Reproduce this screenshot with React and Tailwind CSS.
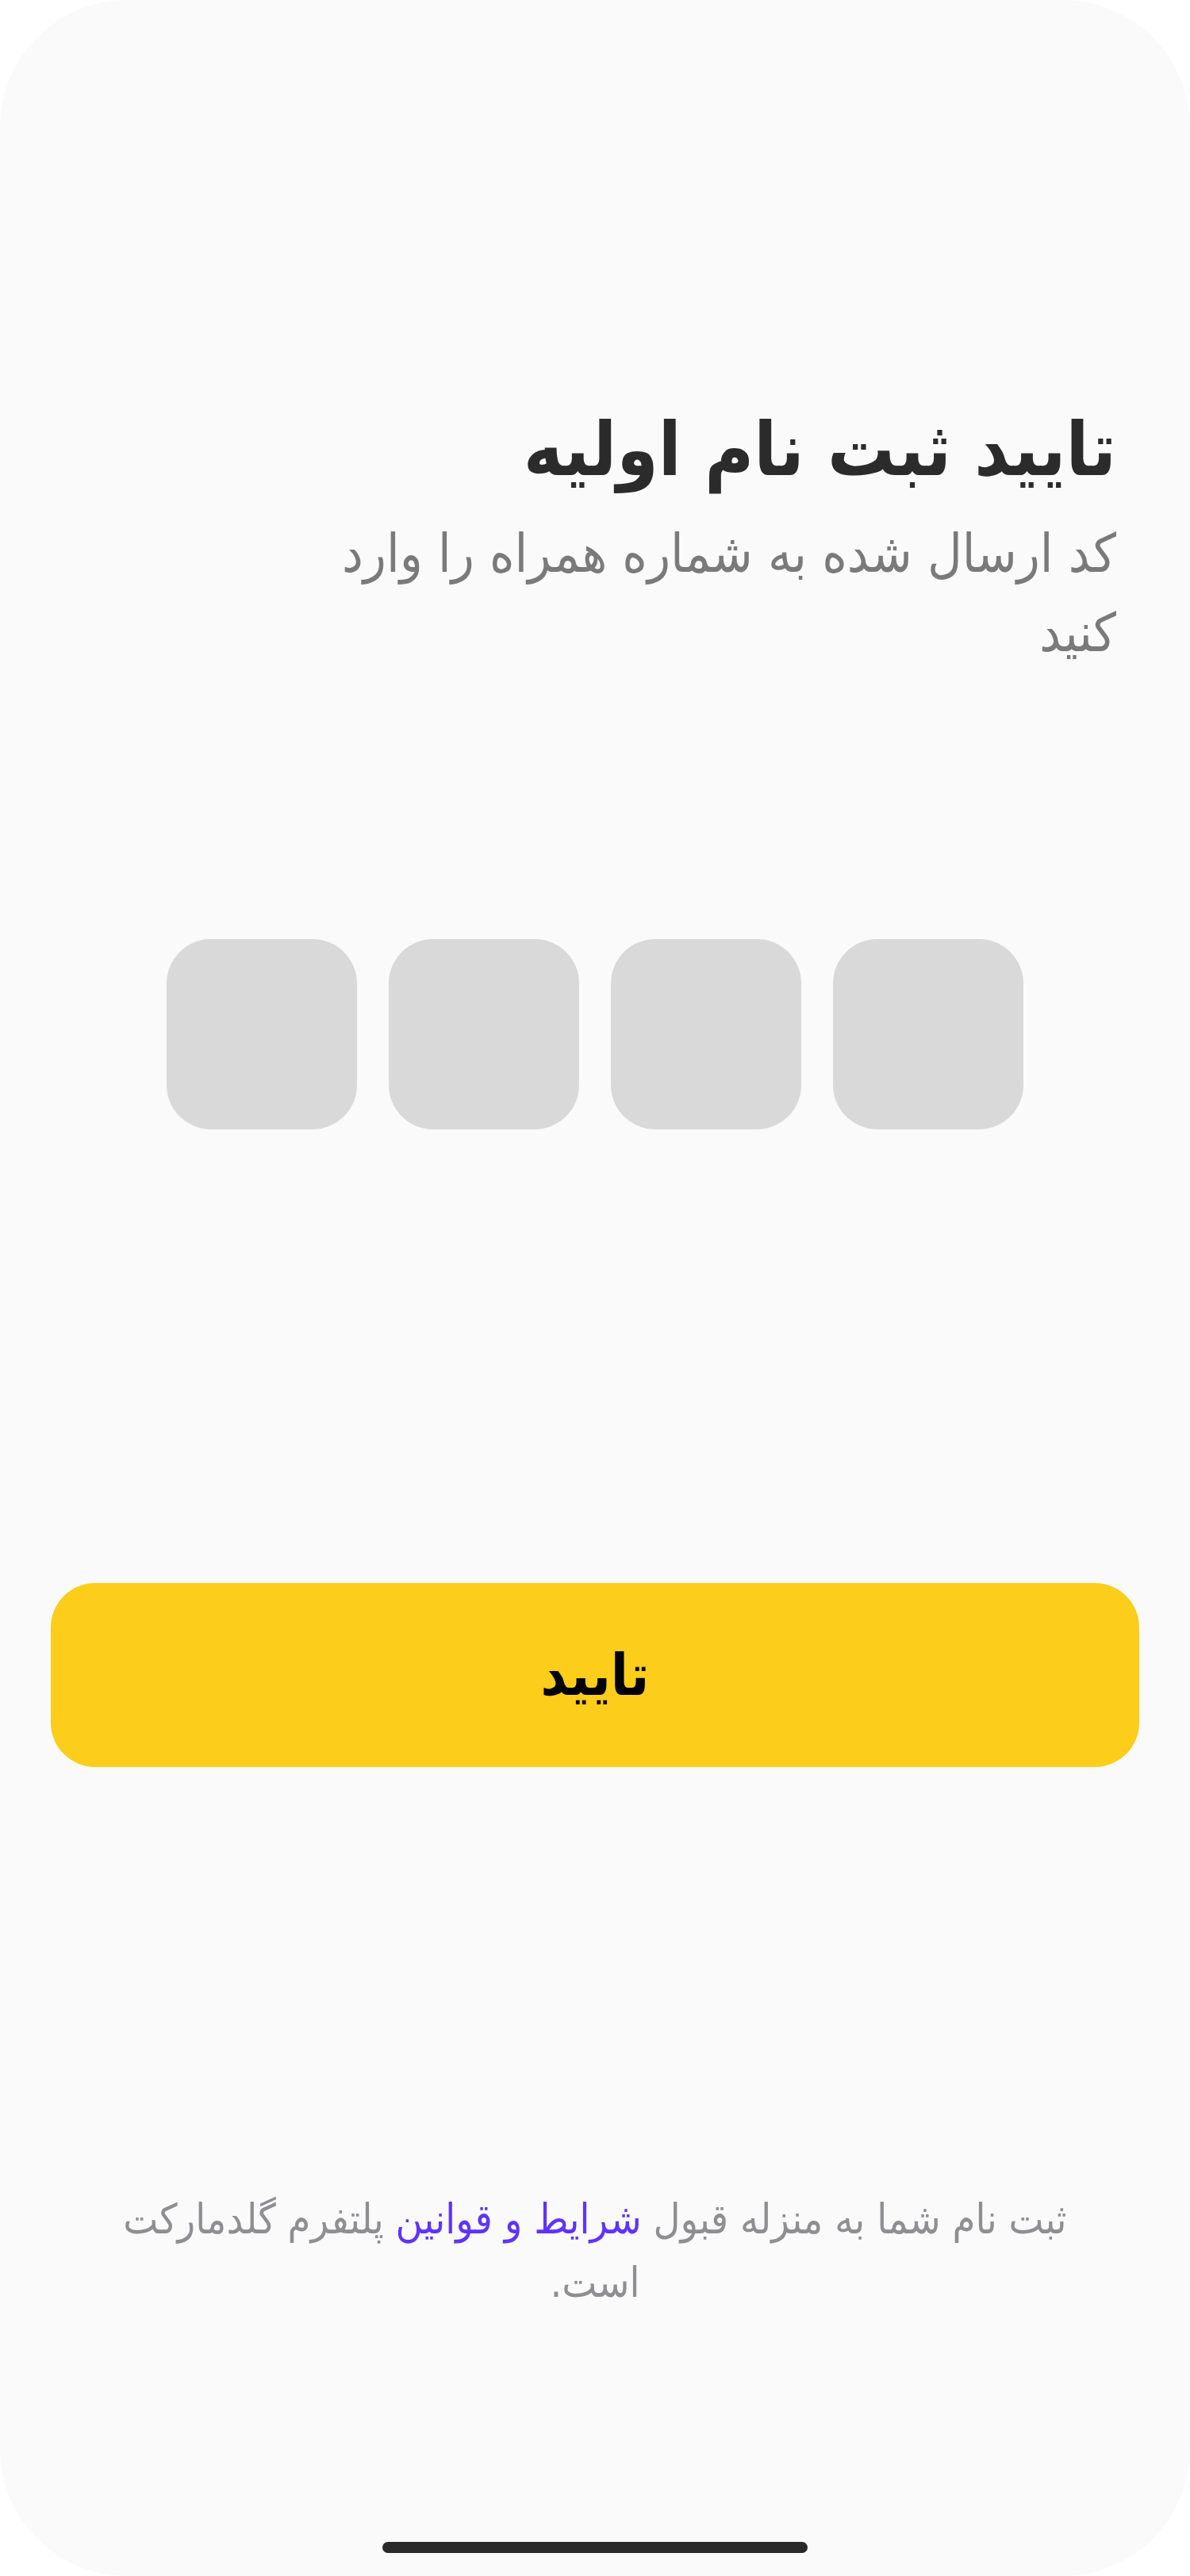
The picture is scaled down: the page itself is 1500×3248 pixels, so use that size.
import React from "react";

export default function App() {
  const font = { fontFamily: '"DejaVu Sans Condensed", "DejaVu Sans", sans-serif' };
  return (
    <div className="w-[1500px] h-[3248px] bg-white font-stretch-condensed" style={font}>
      <div dir="rtl" className="h-full rounded-[160px] bg-[#fafafa] flex flex-col">
        <div className="pt-[503px] px-[93px]">
          <h1 className="text-[94px] leading-[128px] font-bold text-[#2b2b2b]">تایید ثبت نام اولیه</h1>
          <p className="mt-[17px] max-w-[1040px] text-[67px] leading-[100px] text-[#7a7a7a]">
            کد ارسال شده به شماره همراه را وارد کنید
          </p>
        </div>

        <div dir="ltr" className="mt-[336px] flex justify-center gap-[40px]">
          <div className="w-[240px] h-[240px] rounded-[56px] bg-[#d9d9d9]" />
          <div className="w-[240px] h-[240px] rounded-[56px] bg-[#d9d9d9]" />
          <div className="w-[240px] h-[240px] rounded-[56px] bg-[#d9d9d9]" />
          <div className="w-[240px] h-[240px] rounded-[56px] bg-[#d9d9d9]" />
        </div>

        <button className="mx-[64px] mt-[572px] h-[232px] rounded-[56px] bg-[#fccd1a] flex items-center justify-center text-[72px] font-bold text-black">
          تایید
        </button>

        <p className="mt-[530px] mx-auto max-w-[1280px] text-center text-[52px] leading-[80px] text-[#8e8e93]">
          ثبت نام شما به منزله قبول <span className="text-[#5f33ff]">شرایط و قوانین</span> پلتفرم گلدمارکت است.
        </p>

        <div className="mt-auto mb-[29px] mx-auto w-[536px] h-[14px] rounded-full bg-[#2b2b2b]" />
      </div>
    </div>
  );
}
